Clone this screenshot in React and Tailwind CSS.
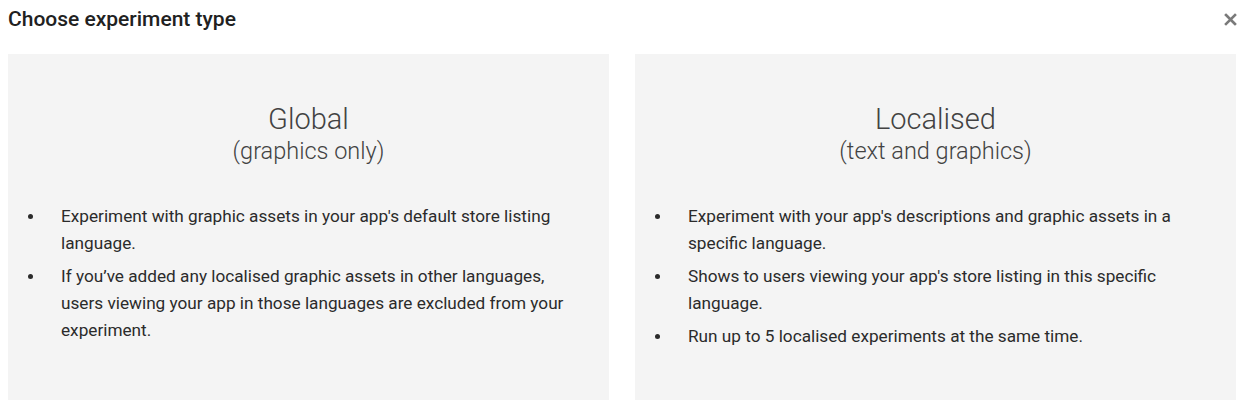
import React from 'react';

const options = [
  {
    title: 'Global',
    subtitle: '(graphics only)',
    points: [
      "Experiment with graphic assets in your app's default store listing language.",
      'If you’ve added any localised graphic assets in other languages, users viewing your app in those languages are excluded from your experiment.',
    ],
  },
  {
    title: 'Localised',
    subtitle: '(text and graphics)',
    points: [
      "Experiment with your app's descriptions and graphic assets in a specific language.",
      "Shows to users viewing your app's store listing in this specific language.",
      'Run up to 5 localised experiments at the same time.',
    ],
  },
];

function OptionCard({ option }) {
  return (
    <div className="flex-1 bg-[#f4f4f4] pt-[48px] pb-10">
      <div className="text-center text-[#424242] font-light">
        <div className="text-[29px] leading-[34px]">{option.title}</div>
        <div className="text-[23.5px] leading-[30px]">{option.subtitle}</div>
      </div>
      <ul className="mt-[37px] pl-[20px] pr-[28px]">
        {option.points.map((p) => (
          <li key={p} className="flex mb-[6px] text-[17.2px] leading-[27px] text-[#2b2b2b]">
            <span className="w-[33px] shrink-0 h-[27px] flex items-center">
              <span className="w-[5px] h-[5px] rounded-full bg-[#2b2b2b]" />
            </span>
            <span>{p}</span>
          </li>
        ))}
      </ul>
    </div>
  );
}

export default function App() {
  return (
    <div className="w-[1250px] h-[400px] overflow-hidden bg-white" style={{ fontFamily: 'Roboto, "Liberation Sans", sans-serif' }}>
      <div className="flex justify-between items-start pl-2 pr-[13px] pt-[6px] h-[54px]">
        <h1 className="text-[21px] leading-[26px] font-medium text-[#212121]">Choose experiment type</h1>
        <button className="text-[#7a7a7a] mt-[7px]" aria-label="Close">
          <svg width="13" height="13" viewBox="0 0 13 13">
            <path d="M2 2 L11 11 M11 2 L2 11" stroke="currentColor" strokeWidth="2.6" strokeLinecap="square" />
          </svg>
        </button>
      </div>
      <div className="flex gap-[26px] pl-2 pr-[14px] h-[346px]">
        {options.map((o) => (
          <OptionCard key={o.title} option={o} />
        ))}
      </div>
    </div>
  );
}
